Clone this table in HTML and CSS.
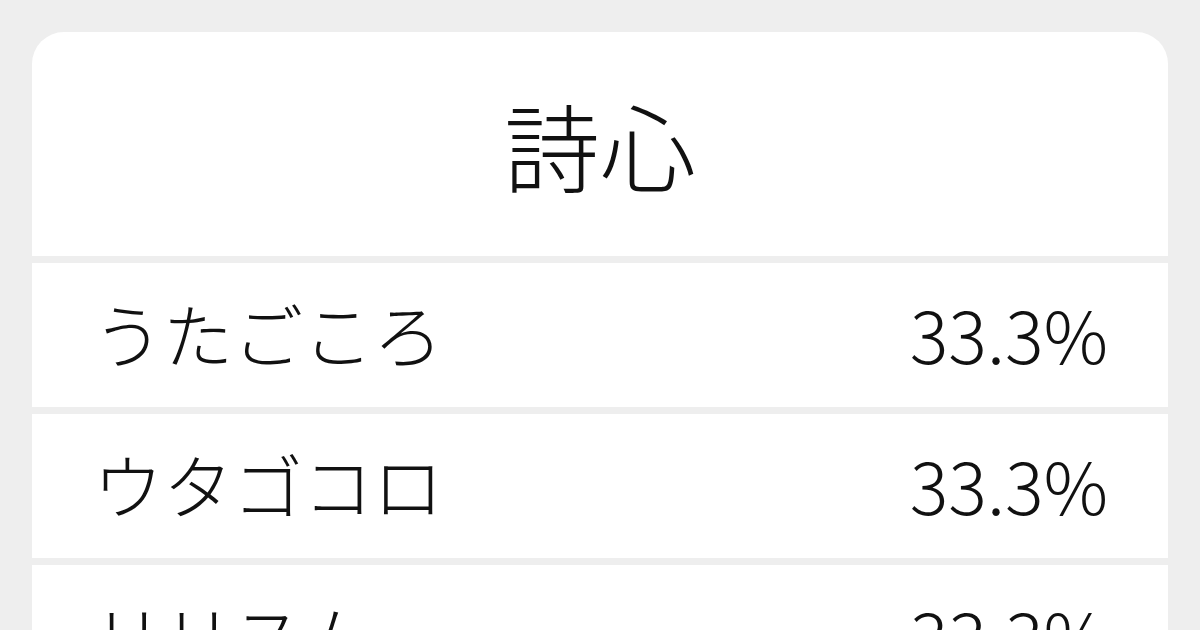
FILE: index.html
```html
<!DOCTYPE html>
<html lang="ja">
<head>
<meta charset="utf-8">
<title>詩心</title>
<link rel="stylesheet" href="styles.css">
</head>
<body>
<div class="card">
  <div class="title">詩心</div>
  <div class="row"><span class="word">うたごころ</span><span class="pct">33.3%</span></div>
  <div class="row"><span class="word">ウタゴコロ</span><span class="pct">33.3%</span></div>
  <div class="row"><span class="word">リリスム</span><span class="pct">33.3%</span></div>
</div>
</body>
</html>
```

FILE: styles.css
```css
html, body {
  margin: 0;
  padding: 0;
  background: #eeeeee;
}
body {
  padding: 32px 32px 0;
  height: 630px;
  box-sizing: border-box;
  overflow: hidden;
  font-family: "Noto Sans CJK JP", "Noto Sans", sans-serif;
  font-weight: 300;
  color: #111111;
}
.card {
  display: flex;
  flex-direction: column;
  gap: 7px;
  background: #eeeeee;
  border-radius: 32px 32px 0 0;
  overflow: hidden;
}
.title {
  background: #ffffff;
  height: 224px;
  display: flex;
  align-items: center;
  justify-content: center;
  font-size: 96px;
  line-height: 1;
}
.row {
  box-sizing: border-box;
  background: #ffffff;
  height: 144px;
  display: flex;
  align-items: center;
  justify-content: space-between;
  padding: 0 60px 4px 61px;
  line-height: 1;
}
.word {
  font-size: 70px;
}
.pct {
  font-size: 72px;
}
```
